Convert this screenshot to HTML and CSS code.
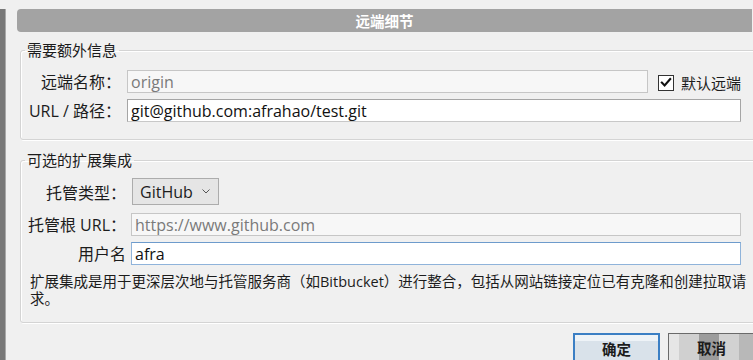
FILE: index.html
```html
<!DOCTYPE html>
<html lang="zh-CN">
<head>
<meta charset="utf-8">
<title>远端细节</title>
<link rel="stylesheet" href="styles.css">
</head>
<body>
<div class="dialog">
  <div class="titlebar">远端细节</div>

  <fieldset class="group group1">
    <legend>需要额外信息</legend>
    <div class="rows rows1">
      <label class="lbl">远端名称：</label>
      <input class="field disabled" type="text" value="origin" disabled>
      <div class="check">
        <span class="box"><svg viewBox="0 0 15 15" width="15" height="15"><path d="M3 7.6 L6 10.6 L12 3.8" fill="none" stroke="#111" stroke-width="2.2" stroke-linecap="square"/></svg></span>
        <span>默认远端</span>
      </div>
      <label class="lbl">URL / 路径：</label>
      <input class="field wide" type="text" value="git@github.com:afrahao/test.git">
    </div>
  </fieldset>

  <fieldset class="group group2">
    <legend>可选的扩展集成</legend>
    <div class="rows rows2">
      <label class="lbl">托管类型：</label>
      <div class="selectrow">
        <div class="select">
          <span>GitHub</span>
          <svg viewBox="0 0 8 5" width="8" height="5"><path d="M0.5 0.5 L4 4 L7.5 0.5" fill="none" stroke="#555" stroke-width="1"/></svg>
        </div>
      </div>
      <label class="lbl">托管根 URL：</label>
      <input class="field disabled" type="text" value="https://www.github.com" disabled>
      <label class="lbl">用户名</label>
      <input class="field focus" type="text" value="afra">
      <div class="desc">
        <span class="line">扩展集成是用于更深层次地与托管服务商（如Bitbucket）进行整合，包括从网站链接定位已有克隆和创建拉取请</span>
        <span class="line">求。</span>
      </div>
    </div>
  </fieldset>

  <div class="buttons">
    <div class="btn ok">确定</div>
    <div class="btn cancel">取消</div>
  </div>
</div>
</body>
</html>
```

FILE: styles.css
```css
html, body {
  margin: 0;
  padding: 0;
  height: 360px;
  overflow: hidden;
  background: #f0f0f0;
}

body {
  font-family: "Open Sans", "Noto Sans CJK SC", sans-serif;
  font-size: 15px;
  color: #1c1c1c;
}

.dialog {
  width: 748px;
  height: 360px;
  border-left: 5px solid #787878;
  box-shadow: inset 1px 0 0 #a9a9a9;
}

.titlebar {
  margin: 9px 1px 0 12px;
  height: 23px;
  background: #a3a3a3;
  border-radius: 4px 0 0 4px;
  color: #fff;
  font-weight: bold;
  font-size: 14.5px;
  font-family: "Noto Sans CJK SC", sans-serif;
  display: flex;
  align-items: center;
  justify-content: center;
}

.group {
  margin: 9px -20px 0 15px;
  padding: 0 0 17px 0;
  border: 1px solid #d4d4d4;
  border-radius: 3px;
  box-shadow: inset 1px 1px 0 #fff, 1px 1px 0 #fff;
  min-width: 0;
}

.group legend {
  margin-left: 4px;
  padding: 0 2px;
  line-height: 18px;
  font-size: 15px;
  font-family: "Noto Sans CJK SC", sans-serif;
}

.group2 {
  margin-top: 11px;
  padding-bottom: 15px;
}

.rows {
  display: grid;
  width: 720px;
  align-items: center;
  row-gap: 6px;
}

.rows1 {
  grid-template-columns: 100px 1fr auto;
  column-gap: 6px;
  padding-top: 11px;
}

.rows2 {
  grid-template-columns: 105px 1fr;
  column-gap: 5px;
  padding-top: 9px;
}

.lbl {
  text-align: right;
  white-space: nowrap;
  line-height: 20px;
  font-size: 16px;
}

.field {
  box-sizing: border-box;
  height: 23px;
  width: 100%;
  margin: 0;
  padding: 0 3px;
  border: 1px solid #a5a5a5;
  border-bottom-color: #c8c8c8;
  background: #fff;
  font-family: "Open Sans", "Noto Sans CJK SC", sans-serif;
  font-size: 16px;
  color: #111;
  outline: none;
}

.field.disabled {
  background: #f7f7f7;
  border-color: #c6c6c6;
  color: #7a7a7a;
  -webkit-text-fill-color: #7a7a7a;
}

.field.focus {
  border-color: #8fb3da;
  border-top-color: #6d9bcc;
}

.wide {
  grid-column: 2 / 4;
}

.check {
  display: flex;
  align-items: center;
  gap: 7px;
  margin-left: 4px;
  padding-top: 2px;
}

.box {
  box-sizing: border-box;
  width: 16px;
  height: 16px;
  border: 1px solid #333;
  background: #fff;
  display: flex;
  align-items: center;
  justify-content: center;
}

.selectrow {
  margin-bottom: 2px;
}

.select {
  box-sizing: border-box;
  width: 87px;
  height: 27px;
  margin-left: 1px;
  padding: 0 8px 0 7px;
  border: 1px solid #acacac;
  background: #e5e5e5;
  font-size: 16px;
  display: flex;
  align-items: center;
  justify-content: space-between;
}

.desc {
  grid-column: 1 / -1;
  margin: 2px 0 0 0;
  padding-left: 9px;
  font-size: 14.5px;
  display: flex;
  flex-direction: column;
  white-space: nowrap;
}

.desc .line {
  display: block;
  height: 17px;
  line-height: 17px;
  overflow: visible;
}

.buttons {
  display: flex;
  gap: 8px;
  margin-top: 10px;
  padding-left: 568px;
}

.btn {
  box-sizing: border-box;
  flex: none;
  width: 87px;
  height: 30px;
  text-align: center;
  line-height: 28px;
  font-weight: bold;
  font-family: "Noto Sans CJK SC", sans-serif;
  font-size: 14.5px;
}

.ok {
  border: 2px solid #3b7fc4;
  border-bottom: none;
  background: linear-gradient(#eef3f7 0 6px, #d9e2ea 6px);
}

.cancel {
  border: 1px solid #6a6a6a;
  border-bottom: none;
  background: linear-gradient(90deg, #e6e6e6 0 10px, #d0d0d0 10px 30px, #9c9c9c 30px 50px, #d2d2d2 50px 70px, #b8b8b8 70px);
}
```
